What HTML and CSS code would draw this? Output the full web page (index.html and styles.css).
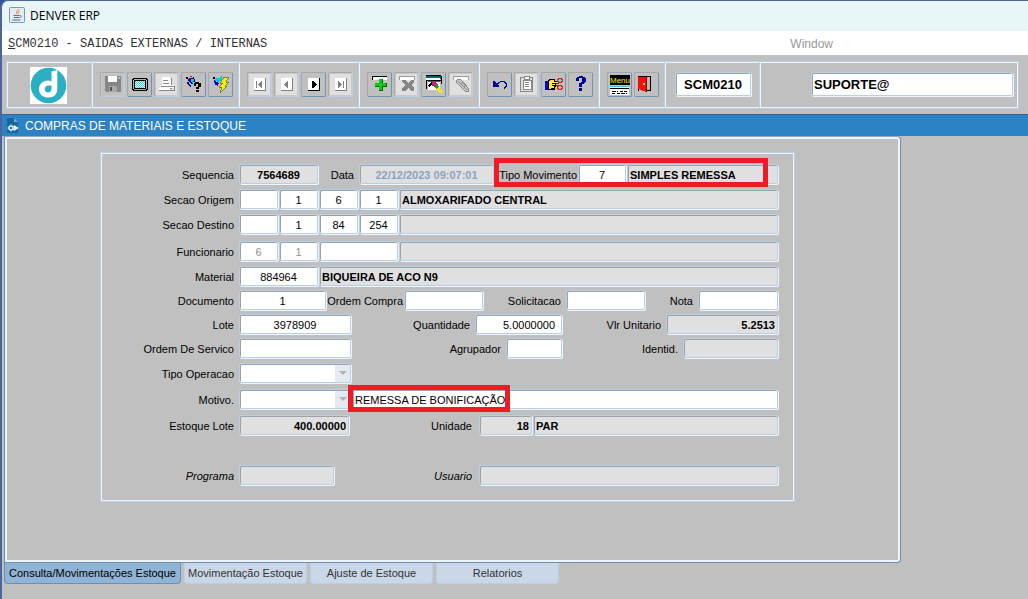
FILE: index.html
```html
<!DOCTYPE html>
<html lang="pt-BR">
<head>
  <meta charset="UTF-8">
  <meta name="viewport" content="width=device-width, initial-scale=1.0">
  <title>DENVER ERP</title>
  <link rel="stylesheet" href="styles.css">
</head>
<body>

  <!-- Barra de título -->
  <header class="titlebar">
    <svg class="app-icon" viewBox="0 0 16 16">
      <rect x="0.5" y="0.5" width="15" height="15" rx="1" fill="#e4ebf0" stroke="#8496a8"/>
      <path d="M9 2c1 2-3 2.500-1 5M10.500 4c-2 1-1.500 2-1 3" fill="none" stroke="#e07a1f"/>
      <path d="M4.500 8.500h6M5 10.500h5M3.500 13h8M11 8.500c2 0 1.500 2-.5 2" fill="none" stroke="#4f6f8f"/>
    </svg>
    <span>DENVER ERP</span>
  </header>

  <nav class="menubar">
    <a href="#" class="menu-program"><u>S</u>CM0210 - SAIDAS EXTERNAS / INTERNAS</a>
    <a href="#" class="menu-window">Window</a>
  </nav>

  <!-- Barra de ferramentas -->
  <div class="toolbar">
    <div class="tool-group logo-group">
      <svg class="logo" viewBox="0 0 37 37">
        <rect width="37" height="37" fill="#fff"/>
        <circle cx="18.500" cy="18.500" r="17.800" fill="#2bafc3"/>
        <path d="M21.500 4.500L27.300 3v19c0 5-3.500 8.500-8.500 8.500-6 0-9.800-3.500-9.800-8.300 0-5 4-8.700 8.800-8.700 1.500 0 2.700.3 3.700.9z" fill="#fff"/>
        <path d="M21.500 18.500v3.500c0 2.200-1.300 3.500-3.300 3.500s-3.400-1.300-3.400-3.300c0-2.300 1.600-3.700 3.700-3.700z" fill="#2bafc3"/>
      </svg>
    </div>

    <div class="tool-group">
      <button class="tool off flat" aria-label="Salvar" disabled>
        <svg viewBox="0 0 20 20"><path d="M2 2h16v16H3l-1-1z" fill="#868686"/><path d="M5 2h9v6H5z" fill="#fff"/><path d="M6 12h8v6H6z" fill="#a8a8a8"/><path d="M7 13h2v4H7z" fill="#555"/><path d="M15 3h2v2h-2z" fill="#bbb"/></svg>
      </button>
      <button class="tool" aria-label="Tela">
        <svg viewBox="0 0 20 20"><path d="M3 4h14v1h1v11h-1v1H3v-1H2V5h1z" fill="#000"/><path d="M4 5h12v1h1v9h-1v1H4v-1H3V6h1z" fill="#b0b0b0"/><path d="M4 6h12v9H4z" fill="#000"/><path d="M5 7h10v7H5z" fill="#e8ffff"/><path d="M5 7.500h10M5 9.500h10M5 11.500h10M5 13.500h10" stroke="#30d8d8" stroke-dasharray="1 1"/><path d="M6 8.500h9M6 10.500h9M6 12.500h9" stroke="#30d8d8" stroke-dasharray="1 1"/></svg>
      </button>
      <button class="tool off" aria-label="Imprimir" disabled>
        <svg viewBox="0 0 20 20"><path d="M5 3h8v1h1v7H5z" fill="#fff"/><path d="M14.500 4v7M6 6.500h5M6 9.500h6" stroke="#888" fill="none"/><path d="M3 11h14v3H3z" fill="#fff"/><path d="M4 12.500h13M2 16.500h16M17.500 12v5M13 14.500h2" stroke="#888" fill="none"/><path d="M2 14h11v2H2z" fill="#fff"/></svg>
      </button>
      <button class="tool" aria-label="Consultar">
        <svg viewBox="0 0 20 20"><path d="M2 3h2v2h2v2H4V5H2zM9 3h1v2h1v3h-1V6H8V4h1z" fill="#000"/><path d="M6 2h2v1H6z" fill="red"/><path d="M5 4h3l2 3-2 4-3-3z" fill="#0000d8"/><path d="M7 5h3l-1 4-2-1z" fill="#00d8e8"/><path d="M4 7l3 5-1 1-3-4z" fill="#000080"/><path d="M9 17.500h10M10 15.500h9M16 9.500h3M16 11.500h3M16 13.500h3" stroke="#f0e040" stroke-dasharray="1 1"/><path d="M10 9h1V8h4v1h2v4h-2v2h-3v-2h2v-3h-2v2h-2zM12 16h3v2h-3z" fill="#000"/></svg>
      </button>
      <button class="tool" aria-label="Executar consulta">
        <svg viewBox="0 0 20 20"><path d="M2 3h2v2h2v2H4V5H2z" fill="#000"/><path d="M5 4h3l3-2v3L8 8 4 7z" fill="#00c8e0"/><path d="M3 6l5 3-1 3-3-1z" fill="#0000c8"/><path d="M13 3h5l-3 5h3l-4 4h2l-7 7 2-6H8l4-4H9z" fill="#f8f000" stroke="#555" stroke-width=".7"/></svg>
      </button>
    </div>

    <div class="tool-group">
      <button class="tool off" aria-label="Primeiro" disabled>
        <svg viewBox="0 0 20 20"><path d="M4 4h11v12H4z" fill="#fff"/><path d="M15.500 4v12.500H4M6.500 7v7" stroke="#808080" fill="none"/><path d="M12 7v7L8 10.500z" fill="#808080"/></svg>
      </button>
      <button class="tool off" aria-label="Anterior" disabled>
        <svg viewBox="0 0 20 20"><path d="M4 4h11v12H4z" fill="#fff"/><path d="M15.500 4v12.500H4" stroke="#808080" fill="none"/><path d="M11 7v7l-4-3.500z" fill="#808080"/></svg>
      </button>
      <button class="tool" aria-label="Próximo">
        <svg viewBox="0 0 20 20"><path d="M4 4h11v12H4z" fill="#fff"/><path d="M15.500 4v12.500H4" stroke="#000" fill="none"/><path d="M8 7v7h1l4-3.500L9 7z" fill="#000"/></svg>
      </button>
      <button class="tool off" aria-label="Último" disabled>
        <svg viewBox="0 0 20 20"><path d="M4 4h11v12H4z" fill="#fff"/><path d="M15.500 4v12.500H4M12.500 7v7" stroke="#808080" fill="none"/><path d="M7 7v7l4-3.500z" fill="#808080"/></svg>
      </button>
    </div>

    <div class="tool-group">
      <button class="tool" aria-label="Inserir registro">
        <svg viewBox="0 0 20 20"><path d="M2 3h15v3H2z" fill="#fff"/><path d="M2 6V2.500h15" stroke="#000" fill="none"/><path d="M9 5h4v4h4v4h-4v4H9v-4H5V9h4z" fill="#060"/><path d="M9 5h3v4h4v3h-4v4H9v-4H5V9h4z" fill="#10c818"/></svg>
      </button>
      <button class="tool off" aria-label="Excluir registro" disabled>
        <svg viewBox="0 0 20 20"><path d="M2 3h15v3H2z" fill="#fff"/><path d="M2 6V2.500h15V6" stroke="#999" fill="none"/><path d="M5 6h3l3 3 3-3h3v2l-3 3 3 3v3h-3l-3-3-3 3H5v-3l3-3-3-3z" fill="#858585"/></svg>
      </button>
      <button class="tool" aria-label="Limpar registro">
        <svg viewBox="0 0 20 20"><path d="M2 2h15v3H2z" fill="#006868"/><path d="M2 4h14v2H2z" fill="#fff"/><path d="M2 1.500h15M2 6.500h15M17.500 2v8M2.500 6v9" stroke="#000" fill="none"/><path d="M4 8h12v8H4z" fill="#fff"/><path d="M4 7.500h12" stroke="#007878"/><path d="M4 11l3-3 2 1-4 4z" fill="#000"/><path d="M8 8h4l2 3-3 2-3-2z" fill="#e0109a"/><path d="M8 9l3 4-3-1z" fill="red"/><path d="M12 10l3 2v3l-2 1-2-2z" fill="#10b010"/><path d="M14 13l5 4-1 2h-3l-2-3z" fill="#f0e820"/></svg>
      </button>
      <button class="tool off" aria-label="Limpar tela" disabled>
        <svg viewBox="0 0 20 20"><path d="M2 3h15v3H2z" fill="#fff"/><path d="M2 6V2.500h15V6" stroke="#999" fill="none"/><path d="M6 6l3-1 9 10-1 3-3-1-9-9z" fill="#c8c8c8" stroke="#888"/><path d="M7 7l9 9M10 10l2-2M13 13l2-2" stroke="#888"/></svg>
      </button>
    </div>

    <div class="tool-group">
      <button class="tool" aria-label="Desfazer">
        <svg viewBox="0 0 20 20"><path d="M3 7h1l5 5v1H3z" fill="#000090"/><path d="M7 10.500l2-2 2-1h3l2 2v3l-2 2" fill="none" stroke="#000090"/></svg>
      </button>
      <button class="tool off" aria-label="Colar" disabled>
        <svg viewBox="0 0 20 20"><path d="M3.500 3.500h12v14h-12z" fill="none" stroke="#888" stroke-width="1.500"/><path d="M6 6h8v9H6z" fill="#fff" stroke="#888"/><path d="M7 2h5v3H7z" fill="#fff" stroke="#888"/><path d="M8 8.500h4M8 10.500h4M8 12.500h4" stroke="#888"/></svg>
      </button>
      <button class="tool" aria-label="Recortar">
        <svg viewBox="0 0 20 20"><path d="M1 7h3v9H1z" fill="#0000e0"/><path d="M4 8l2-3h4v2h4v2h-3v3h-1v3H4z" fill="#f8e858" stroke="#000"/><path d="M8 9h4M8 11.500h3M7 14h3" stroke="#000"/><path d="M12 10l3-1M12 11l3 1" stroke="#d00"/><circle cx="16" cy="6.500" r="2.200" fill="none" stroke="#e02020"/><circle cx="16" cy="13.500" r="2.200" fill="none" stroke="#e02020"/></svg>
      </button>
      <button class="tool" aria-label="Ajuda">
        <svg viewBox="0 0 20 20"><path d="M5 4h1V3h2V2h4v1h2v1h1v4h-1v1h-1v1h-2v3H8V9h2V8h1V4H8v3H5zM8 14h3v3H8z" fill="#000090"/></svg>
      </button>
    </div>

    <div class="tool-group">
      <button class="tool">
        <svg class="wide" viewBox="0 0 22 22"><path d="M1 2h20v10H1z" fill="#000"/><text x="1" y="10" class="menu-text">Menu</text><path d="M1 13.500h19" stroke="#38c8d8"/><path d="M1 14h19v8H1z" fill="#fff"/><path d="M1 15.500h19" stroke="#000"/><path d="M3 18.500h4M8 18.500h1M11 18.500h3M15 18.500h3M3 20.500h3M8 20.500h3M12 20.500h4M17 20.500h1" stroke="#000"/></svg>
      </button>
      <button class="tool" aria-label="Sair">
        <svg viewBox="0 0 20 20"><path d="M1.500 16.500v-14h12v14H8" fill="#b8b8b8" stroke="#000"/><path d="M1 3h8v15L2 15H1z" fill="#f01010"/><path d="M9 3v15" stroke="#900"/><path d="M6 9h2v2H6z" fill="#f8f000"/></svg>
      </button>
    </div>

    <div class="tool-group program-group">
      <input type="text" class="field program-code" aria-label="Programa atual" value="SCM0210">
    </div>
    <div class="tool-group user-group">
      <input type="text" class="field user-name" aria-label="Usuário conectado" value="SUPORTE@">
    </div>
  </div>

  <!-- Título da janela -->
  <div class="window-title">
    <svg class="window-icon" viewBox="0 0 14 16">
      <path d="M1 0h7l4 4v11H1z" fill="#1b659f"/><path d="M8 0l4 4H8z" fill="#6aaedb"/>
      <circle cx="5" cy="10" r="2" fill="none" stroke="#e6f4ff" stroke-width="1.500"/>
      <path d="M5 6.500v1M5 12.500v1M1.500 10h1M8 7.500l4 2.500-4 2.500z" fill="#e6f4ff" stroke="#e6f4ff"/>
    </svg>
    <h1>COMPRAS DE MATERIAIS E ESTOQUE</h1>
  </div>

  <main class="panel">
    <form class="frame">

      <div class="row">
        <label class="main" for="sequencia">Sequencia</label>
        <input type="text" id="sequencia" class="field locked center medium" value="7564689" readonly>
        <label class="lbl-data" for="data">Data</label>
        <input type="text" id="data" class="field locked center date" value="22/12/2023 09:07:01" readonly>
        <div class="mark mark-type">
          <label class="lbl-type" for="tipoMovimento">Tipo Movimento</label>
          <input type="text" id="tipoMovimento" class="field center type" value="7">
          <input type="text" class="field locked fill" aria-label="Descrição do tipo" value="SIMPLES REMESSA" readonly>
        </div>
      </div>

      <div class="row row-loose">
        <label class="main" for="secaoOrigem">Secao Origem</label>
        <input type="text" id="secaoOrigem" class="field center small">
        <input type="text" class="field center small" aria-label="Origem empresa" value="1">
        <input type="text" class="field center small" aria-label="Origem filial" value="6">
        <input type="text" class="field center small" aria-label="Origem seção" value="1">
        <input type="text" class="field locked fill" aria-label="Descrição origem" value="ALMOXARIFADO CENTRAL" readonly>
      </div>

      <div class="row row-loose">
        <label class="main" for="secaoDestino">Secao Destino</label>
        <input type="text" id="secaoDestino" class="field center small">
        <input type="text" class="field center small" aria-label="Destino empresa" value="1">
        <input type="text" class="field center small" aria-label="Destino filial" value="84">
        <input type="text" class="field center small" aria-label="Destino seção" value="254">
        <input type="text" class="field locked fill" aria-label="Descrição destino" readonly>
      </div>

      <div class="row row-employee">
        <label class="main" for="funcionario">Funcionario</label>
        <input type="text" id="funcionario" class="field center small faded" value="6">
        <input type="text" class="field center small faded" aria-label="Funcionario filial" value="1">
        <input type="text" class="field medium" aria-label="Matrícula">
        <input type="text" class="field locked fill" aria-label="Nome do funcionário" readonly>
      </div>

      <div class="row row-loose">
        <label class="main" for="material">Material</label>
        <input type="text" id="material" class="field center medium" value="884964">
        <input type="text" class="field locked fill" aria-label="Descrição do material" value="BIQUEIRA DE ACO N9" readonly>
      </div>

      <div class="row">
        <label class="main" for="documento">Documento</label>
        <input type="text" id="documento" class="field center number" value="1">
        <label class="lbl-order" for="ordemCompra">Ordem Compra</label>
        <input type="text" id="ordemCompra" class="field medium">
        <label class="lbl-request" for="solicitacao">Solicitacao</label>
        <input type="text" id="solicitacao" class="field medium">
        <label class="lbl-invoice" for="nota">Nota</label>
        <input type="text" id="nota" class="field fill">
      </div>

      <div class="row">
        <label class="main" for="lote">Lote</label>
        <input type="text" id="lote" class="field center large" value="3978909">
        <label class="lbl-quantity" for="quantidade">Quantidade</label>
        <input type="text" id="quantidade" class="field right number quantity" value="5.0000000">
        <label class="lbl-price" for="vlrUnitario">Vlr Unitario</label>
        <input type="text" id="vlrUnitario" class="field locked right fill" value="5.2513" readonly>
      </div>

      <div class="row">
        <label class="main" for="ordemServico">Ordem De Servico</label>
        <input type="text" id="ordemServico" class="field large">
        <label class="lbl-grouper" for="agrupador">Agrupador</label>
        <input type="text" id="agrupador" class="field grouper">
        <label class="lbl-ident" for="identid">Identid.</label>
        <input type="text" id="identid" class="field locked fill" readonly>
      </div>

      <div class="row row-loose">
        <label class="main" for="tipoOperacao">Tipo Operacao</label>
        <div class="combo large">
          <select id="tipoOperacao" class="field"><option></option></select>
        </div>
      </div>

      <div class="row row-spaced">
        <label class="main" for="motivo">Motivo.</label>
        <div class="combo large">
          <select id="motivo" class="field"><option></option></select>
        </div>
        <div class="mark mark-reason">
          <input type="text" class="field fill" aria-label="Descrição do motivo" value="REMESSA DE BONIFICAÇÃO">
        </div>
      </div>

      <div class="row row-spaced">
        <label class="main" for="estoqueLote">Estoque Lote</label>
        <input type="text" id="estoqueLote" class="field locked right stock" value="400.00000" readonly>
        <label class="lbl-unit" for="unidade">Unidade</label>
        <input type="text" id="unidade" class="field locked right unit" value="18" readonly>
        <input type="text" class="field locked fill" aria-label="Descrição da unidade" value="PAR" readonly>
      </div>

      <div class="row row-audit">
        <label class="main" for="programa">Programa</label>
        <input type="text" id="programa" class="field locked program" readonly>
        <label class="lbl-user" for="usuario">Usuario</label>
        <input type="text" id="usuario" class="field locked fill" readonly>
      </div>

    </form>
  </main>

  <!-- Abas -->
  <div class="tabs" role="tablist">
    <button class="tab active" role="tab" aria-selected="true">Consulta/Movimentações Estoque</button>
    <button class="tab" role="tab">Movimentação Estoque</button>
    <button class="tab" role="tab">Ajuste de Estoque</button>
    <button class="tab" role="tab">Relatorios</button>
  </div>

</body>
</html>
```

FILE: styles.css
```css
*, *::after {
  box-sizing: border-box;
}
html {
  background-color: #2f55a0;
}
body {
  margin: 0;
  min-height: 100vh;
  font-family: "Liberation Sans", Arial, sans-serif;
  font-size: 11px;
  color: #000;
  background-color: #c0c0c0;
  border-top: 1px solid #4a669c;
  border-left: 2px solid #4a669c;
  border-top-left-radius: 8px;
  overflow: hidden;
}
input, select, button {
  font: inherit;
  color: inherit;
}

/* Barra de título e menu */
.titlebar {
  display: flex;
  align-items: center;
  gap: 5px;
  height: 30px;
  padding: 0 0 2px 7px;
  background-color: #e8f6f7;
  font-family: "Open Sans", sans-serif;
  font-size: 12px;
}
.app-icon {
  width: 16px;
  height: 16px;
}
.menubar {
  display: flex;
  align-items: center;
  justify-content: space-between;
  height: 24px;
  padding: 2px 195px 0 6px;
  background-color: #fff;
}
.menubar a {
  text-decoration: none;
  font-size: 12px;
}
.menu-program {
  font-family: "Liberation Mono", "Courier New", monospace;
  color: #333;
}
.menubar .menu-window {
  color: #999;
}

/* Barra de ferramentas */
.toolbar {
  display: flex;
  height: 48px;
  margin: 6px 9px 5px 4px;
  border: 1px solid #b8cfe5;
  box-shadow: inset 0 1px #eef5fc, inset -1px -1px #eef5fc;
}
.tool-group {
  display: flex;
  align-items: center;
  gap: 2px;
  padding: 0 5px 2px 8px;
  border-left: 1px solid #b8cfe5;
  box-shadow: inset 1px 0 #eef5fc;
}
.logo-group {
  padding: 0 24px 0 23px;
  border-left: none;
}
.logo {
  width: 37px;
  height: 37px;
}
.tool {
  display: flex;
  align-items: center;
  justify-content: center;
  width: 25px;
  height: 25px;
  padding: 0;
  background-color: #c0c0c0;
  border: 1px solid;
  border-color: #a4a8ac #6f92b8 #6f92b8 #a4a8ac;
  border-radius: 2px;
}
.tool.off {
  background-color: #e0e0e0;
  border-color: #a8a8a8 #b8cfe5 #b8cfe5 #a8a8a8;
  box-shadow: inset 0 0 0 1px #c8c8c8;
}
.tool.flat {
  background-color: #c0c0c0;
}
.tool svg {
  width: 20px;
  height: 20px;
  flex: none;
  shape-rendering: crispEdges;
}
.tool svg.wide {
  width: 22px;
  height: 22px;
}
.menu-text {
  font-size: 8px;
  fill: #f8f000;
}
.program-group {
  padding-left: 10px;
  padding-right: 8px;
}
.user-group {
  flex: 1;
  justify-content: flex-end;
  padding-left: 51px;
}

/* Campos */
.field {
  height: 20px;
  min-width: 0;
  padding: 1px 2px 0;
  background-color: #fff;
  border: 1px solid #b8cfe5;
  border-radius: 2px;
  box-shadow: inset 1px 1px #9aa2ac, 1px 1px #eef5fc;
  outline: none;
}
.field.program-code,
.field.user-name {
  height: 24px;
  font-size: 13px;
  font-weight: bold;
}
.program-code {
  width: 76px;
  text-align: center;
}
.user-name {
  width: 100%;
}
.locked {
  background-color: #e0e0e0;
  font-weight: bold;
}
.faded {
  color: #909090;
}
.date {
  width: 135px;
  color: #8aa3bf;
}
.center {
  text-align: center;
}
.right {
  text-align: right;
}
.small {
  width: 39px;
}
.type {
  width: 48px;
}
.unit {
  width: 53px;
}
.grouper {
  width: 56px;
}
.medium {
  width: 79px;
}
.number {
  width: 87px;
}
.quantity {
  padding-right: 6px;
}
.program {
  width: 95px;
}
.stock {
  width: 110px;
}
.large {
  width: 112px;
}
.fill {
  flex: 1;
  width: 0;
}

/* Janela */
.window-title {
  display: flex;
  align-items: center;
  gap: 5px;
  height: 22px;
  padding-left: 4px;
  background-color: #2b82c4;
  border-top: 1px solid #3d5f8f;
}
.window-icon {
  width: 14px;
  height: 16px;
}
.window-title h1 {
  margin: 0;
  font-size: 12px;
  font-weight: normal;
  color: #fff;
}
.panel {
  margin: 0 127px 0 2px;
  padding: 15px 105px 60px 95px;
  border: 1px solid #6b8fb5;
  border-top-color: #8ea6c0;
  border-radius: 0 4px 4px 0;
  box-shadow: inset 0 0 0 2px #eef5fc;
}
.frame {
  display: flex;
  flex-direction: column;
  gap: 4px;
  padding: 11px 16px 16px 0;
  border: 1px solid #b8cfe5;
  box-shadow: inset 1px 1px #eef5fc, inset -1px -1px #eef5fc;
}
.row {
  display: flex;
  align-items: center;
  gap: 1px;
}
.row-loose {
  margin-top: 1px;
}
.row-employee {
  margin-top: 3px;
}
.row-spaced {
  margin-top: 2px;
}
.row-audit {
  margin-top: 26px;
}
label {
  padding: 1px 4px 0 0;
  text-align: right;
  white-space: nowrap;
}
.main {
  width: 137px;
}
.row-audit label {
  font-style: italic;
}
.lbl-data {
  width: 39px;
}
.lbl-type {
  width: 82px;
  padding-right: 0;
}
.lbl-order {
  width: 76px;
  padding-right: 0;
}
.lbl-request {
  width: 81px;
}
.lbl-invoice {
  width: 51px;
}
.lbl-quantity {
  width: 122px;
}
.lbl-price {
  width: 102px;
}
.lbl-grouper {
  width: 153px;
}
.lbl-ident {
  width: 119px;
}
.lbl-unit {
  width: 128px;
}
.lbl-user {
  width: 143px;
}
.lbl-unit,
.lbl-user {
  padding-right: 6px;
}

.combo {
  position: relative;
  display: flex;
}
.combo select {
  flex: 1;
  appearance: none;
  background-image: linear-gradient(#e6ebf1, #e6ebf1);
  background-size: 15px 100%;
  background-position: right;
  background-repeat: no-repeat;
}
.combo::after {
  content: "";
  position: absolute;
  top: 8px;
  right: 4px;
  border: 4px solid transparent;
  border-top-color: #b0b4b8;
  border-bottom: none;
  pointer-events: none;
}

/* Destaques em vermelho */
.mark {
  position: relative;
  display: flex;
  align-items: center;
  gap: 1px;
  flex: 1;
}
.mark::after {
  content: "";
  position: absolute;
  border: 5px solid #ed1c24;
  pointer-events: none;
}
.mark-type::after {
  top: -6px;
  right: 10px;
  bottom: -3px;
  left: -1px;
}
.mark-reason::after {
  top: -4px;
  bottom: -3px;
  left: -4px;
  width: 162px;
}

/* Abas */
.tabs {
  display: flex;
  gap: 3px;
  padding-left: 2px;
}
.tab {
  width: 123px;
  height: 21px;
  padding: 0;
  color: #333;
  background-color: #c9d7e9;
  border: 1px solid #b8cfe5;
  border-top: none;
  border-radius: 0 0 4px 4px;
}
.tab.active {
  width: 177px;
  color: #000;
  background-color: #8fb4d6;
  border-color: #6b8fb5;
}
```
